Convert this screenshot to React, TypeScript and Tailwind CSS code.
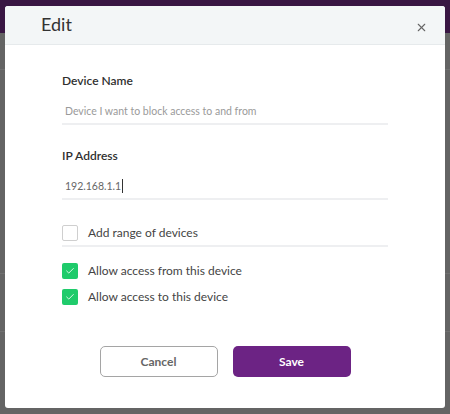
import { X, Check } from "lucide-react";

function Field({ label, value, placeholder }: { label: string; value?: string; placeholder?: string }) {
  return (
    <div className="flex flex-col">
      <span className="h-[16px] text-[12px] font-semibold text-[#2f2f2f] leading-[16px]">{label}</span>
      <div className="mt-[13px] flex items-center h-[18px] pl-[3px] text-[10.5px] leading-[18px]">
        {value ? (
          <>
            <span className="text-[#666]">{value}</span>
            <span className="w-px h-[14px] bg-[#333] ml-px" />
          </>
        ) : (
          <span className="text-[#9a9a9a]">{placeholder}</span>
        )}
      </div>
      <div className="mt-[3px] h-[2px] bg-[#eeeff1]" />
    </div>
  );
}

function Box({ checked, label }: { checked?: boolean; label: string }) {
  return (
    <div className="flex items-center gap-[10px] h-[16px]">
      <span
        className={
          checked
            ? "w-[16px] h-[16px] rounded-[2px] bg-[#1fcb6b] flex items-center justify-center"
            : "w-[16px] h-[16px] rounded-[2px] border border-[#cfcfcf] bg-white"
        }
      >
        {checked && <Check className="w-[10px] h-[10px] text-white" strokeWidth={2} />}
      </span>
      <span className="text-[12px] leading-[16px] text-[#444]">{label}</span>
    </div>
  );
}

export default function App() {
  return (
    <div className="relative w-[450px] h-[414px] overflow-hidden bg-[#646464]" style={{ fontFamily: "Lato, 'Noto Sans', sans-serif" }}>
      <div className="h-[33px] bg-[#391643]" />
      <div className="h-px bg-[#707070] mt-[36px]" />
      <div className="h-px bg-[#707070] mt-[203px]" />
      <div className="h-px bg-[#707070] mt-[57px]" />

      <div className="absolute left-[5px] top-[6px] w-[440px] h-[402px] bg-white rounded-[3px] overflow-hidden flex flex-col">
        <div className="h-[39px] shrink-0 bg-[#f3f6f7] border-b border-[#e6eaec] flex items-center justify-between pl-[36px] pr-[17px]">
          <span className="text-[18px] text-[#333] leading-none pb-[2px]">Edit</span>
          <X className="w-[13px] h-[13px] text-[#666] mt-[4px]" strokeWidth={2} />
        </div>

        <div className="flex flex-col px-[57px] pt-[28px]">
          <Field label="Device Name" placeholder="Device I want to block access to and from" />
          <div className="mt-[23px]">
            <Field label="IP Address" value="192.168.1.1" />
          </div>

          <div className="mt-[25px]">
            <Box label="Add range of devices" />
          </div>
          <div className="mt-[4px] h-[2px] bg-[#eeeff1]" />

          <div className="mt-[16px] flex flex-col gap-[10px]">
            <Box checked label="Allow access from this device" />
            <Box checked label="Allow access to this device" />
          </div>

          <div className="mt-[41px] flex justify-center gap-[15px]">
            <button className="w-[118px] h-[31px] rounded-[5px] border border-[#a5a5a5] bg-white text-[12px] font-bold text-[#666]">
              Cancel
            </button>
            <button className="w-[118px] h-[31px] rounded-[5px] bg-[#6c2384] text-[12px] font-bold text-white">
              Save
            </button>
          </div>
        </div>
      </div>
    </div>
  );
}
